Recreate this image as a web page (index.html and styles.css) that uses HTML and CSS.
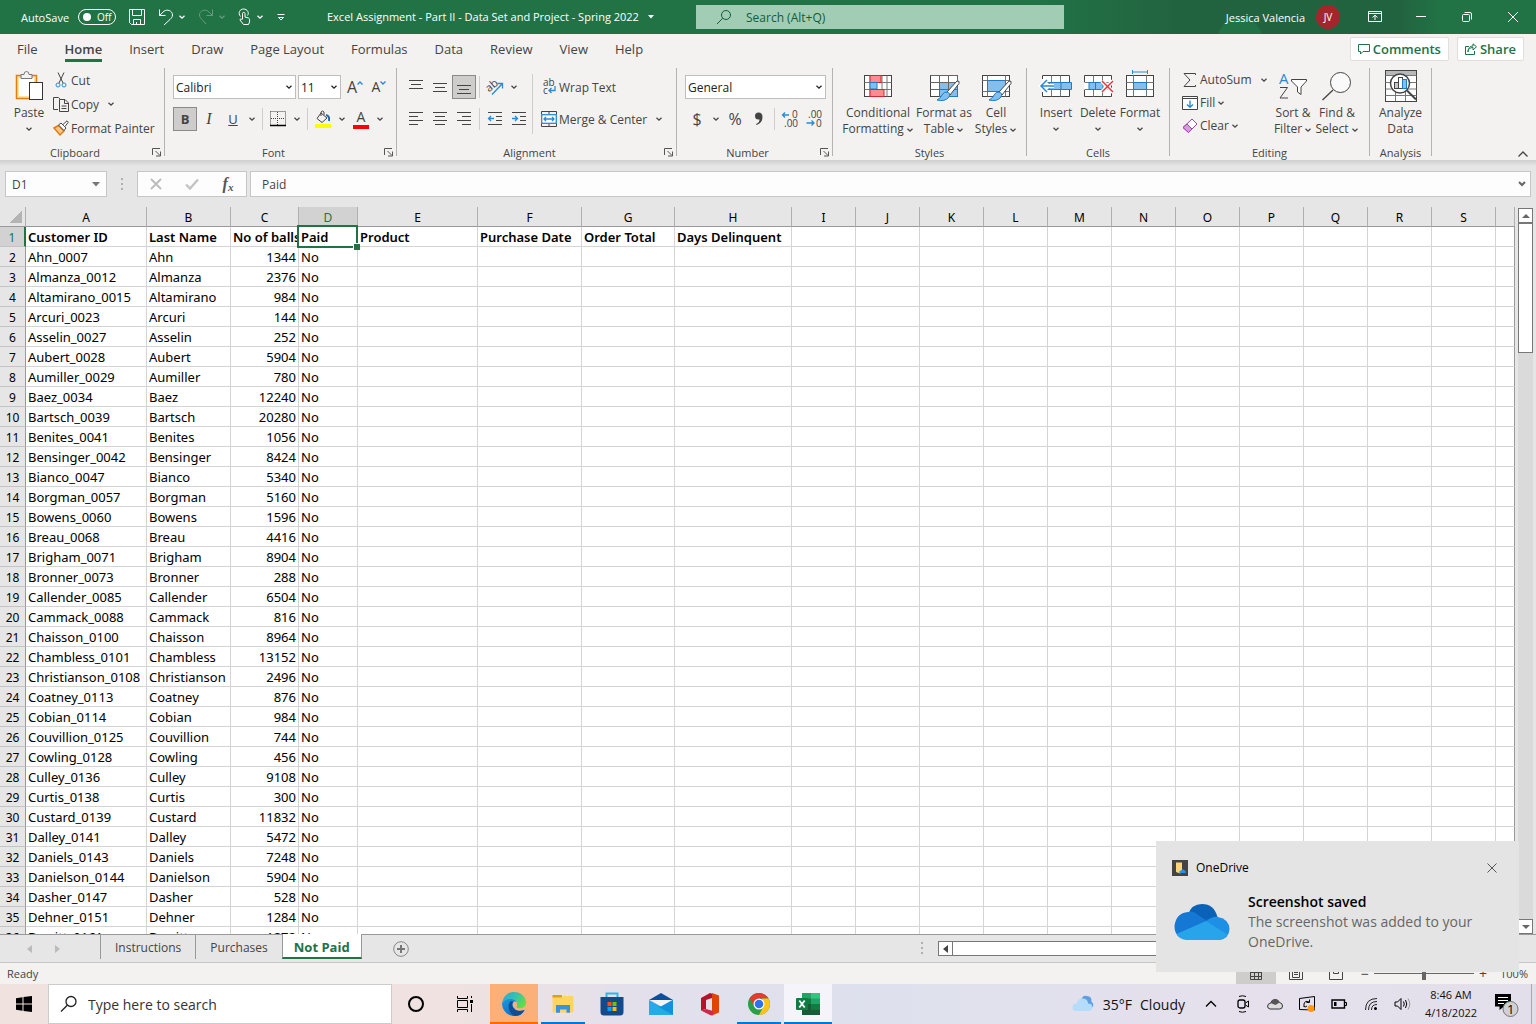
FILE: index.html
```html
<!DOCTYPE html>
<html lang="en">
<head>
    <meta charset="UTF-8">
    <meta name="viewport" content="width=device-width, initial-scale=1.0">
    <title>Excel Assignment - Part II - Data Set and Project - Spring 2022</title>
    <link rel="stylesheet" href="styles.css">
</head>
<body>
    <svg class="defs" width="0" height="0">
        <symbol id="chev" viewBox="0 0 8 8"><path d="M1.5 2.8 L4 5.2 L6.5 2.8" fill="none" stroke="currentColor" stroke-width="1.3"/></symbol>
        <symbol id="launch" viewBox="0 0 10 10"><path d="M0.5 8 V1.5 H8 M3.5 4 L8 8.5 M8.5 4.5 V9 H4" fill="none" stroke="#555"/></symbol>
    </svg>

    <header class="titlebar">
        <div class="quick">
            <label class="autosave">AutoSave <input type="checkbox" class="toggle-box"><span class="toggle"><i></i>Off</span></label>
            <button class="tb" aria-label="Save"><svg width="18" height="18" viewBox="0 0 18 18"><path d="M1.5 1.5 H16.5 V16.5 H3.5 L1.5 14.5 Z M4.5 1.5 V7.5 H13.5 V1.5 M5.5 16.5 V11.5 H12.5 V16.5 M8.5 14 V16"/></svg></button>
            <button class="tb" aria-label="Undo"><svg width="16" height="18" viewBox="0 0 16 18"><path d="M1.5 1.5 V7.5 H7.5 M1.5 7.5 L6 3.2 C9 1 14.5 2.5 14.5 7 C14.5 9 13 10.5 12 11.5 L6 17"/></svg><svg class="chev"><use href="#chev"/></svg></button>
            <button class="tb faded" aria-label="Redo"><svg width="16" height="18" viewBox="0 0 16 18"><path d="M14.5 1.5 V7.5 H8.5 M14.5 7.5 L10 3.2 C7 1 1.5 2.5 1.5 7 C1.5 9 3 10.5 4 11.5 L8 16"/></svg><svg class="chev"><use href="#chev"/></svg></button>
            <button class="tb" aria-label="Touch mode"><svg width="14" height="18" viewBox="0 0 14 18"><path d="M4.5 11 V5.5 C4.5 4 7 4 7 5.5 V9 L10.5 10 C12 10.5 11.5 13 11.5 14 L10.5 16.5 H5.5 L2 12 C2 10.5 3.5 10.5 4.5 12 M2.5 8.5 C-0.5 5 2 1 5.5 1 C9.5 1 11.5 5 9.5 7.5"/></svg><svg class="chev"><use href="#chev"/></svg></button>
            <button class="tb" aria-label="Customize"><svg width="10" height="10" viewBox="0 0 10 10"><path d="M1.5 2.5 H8.5 M2.5 5.5 L5 8 L7.5 5.5 Z"/></svg></button>
        </div>
        <div class="doc-name">Excel Assignment - Part II - Data Set and Project - Spring 2022 <svg width="6" height="4" viewBox="0 0 6 4"><path d="M0 0 H6 L3 3.5 Z" fill="#fff" stroke="none"/></svg></div>
        <label class="tell-me">
            <svg width="16" height="16" viewBox="0 0 16 16"><circle cx="10" cy="6" r="4.5"/><path d="M6.8 9.2 L1 15"/></svg>
            <input type="text" placeholder="Search (Alt+Q)" aria-label="Search">
        </label>
        <div class="account">
            <span>Jessica Valencia</span>
            <span class="avatar">JV</span>
        </div>
        <div class="win-buttons">
            <button aria-label="Ribbon display"><svg width="14" height="12" viewBox="0 0 14 12"><path d="M0.5 0.5 H13.5 V10.5 H0.5 Z M0.5 2.5 H13.5 M7 9 V4.5 M4.5 6.5 L7 4.2 L9.5 6.5"/></svg></button>
            <button aria-label="Minimize"><svg width="10" height="10" viewBox="0 0 10 10"><path d="M0 4.5 H10"/></svg></button>
            <button aria-label="Restore"><svg width="10" height="10" viewBox="0 0 10 10"><rect x="0.5" y="2.5" width="7" height="7" rx="1"/><path d="M2.5 0.5 H8 Q9.5 0.5 9.5 2 V7.5"/></svg></button>
            <button aria-label="Close"><svg width="10" height="10" viewBox="0 0 10 10"><path d="M0 0 L10 10 M10 0 L0 10"/></svg></button>
        </div>
    </header>

    <nav class="tabs">
        <a href="#">File</a>
        <a href="#" class="active">Home</a>
        <a href="#">Insert</a>
        <a href="#">Draw</a>
        <a href="#">Page Layout</a>
        <a href="#">Formulas</a>
        <a href="#">Data</a>
        <a href="#">Review</a>
        <a href="#">View</a>
        <a href="#">Help</a>
        <div class="tab-buttons">
            <button><svg width="12" height="12" viewBox="0 0 12 12"><path d="M0.5 1.5 H11.5 V8.5 H5 L2.5 11 V8.5 H0.5 Z"/></svg>Comments</button>
            <button><svg width="12" height="12" viewBox="0 0 12 12"><path d="M4 3.5 H0.5 V11.5 H9.5 V8 M3 9 C3 6 5 4.5 8 4.5 V7 L11.5 3.8 L8 0.8 V3 C5 3 3 5 3 9 Z"/></svg>Share</button>
        </div>
    </nav>

    <div class="ribbon">
        <section class="group clipboard">
            <div class="tools">
                <button class="big paste">
                    <svg width="30" height="32" viewBox="0 0 30 32"><rect x="2.5" y="5.5" width="20" height="23" fill="#fbe3a4" stroke="#e07c10" stroke-width="1.5"/><rect x="5" y="8" width="15" height="18" fill="#fff" stroke="none"/><path d="M7 8.5 V4.5 H10 Q10 1.5 12.5 1.5 Q15 1.5 15 4.5 H18 V8.5 Z" fill="#f3f2f1" stroke="#777"/><rect x="15.5" y="12.5" width="13" height="17" fill="#fff" stroke="#333"/></svg>
                    <span>Paste</span>
                    <svg class="chev"><use href="#chev"/></svg>
                </button>
                <div class="stack tall">
                    <button class="small"><svg width="16" height="16" viewBox="0 0 16 16"><path d="M5 0.5 L10 11 M11 0.5 L6 11"/><circle cx="5" cy="13" r="2" stroke="#2b8ad0"/><circle cx="11" cy="13" r="2" stroke="#2b8ad0"/></svg>Cut</button>
                    <button class="small"><svg width="16" height="16" viewBox="0 0 16 16"><path d="M5 13.5 H0.5 V1.5 H5.5 L7 3 M6.5 3.5 H12 L15.5 7 V15.5 H6.5 Z M11.5 3.5 V7.5 H15.5 M8.5 10 H13.5 M8.5 12.5 H13.5"/></svg>Copy <svg class="chev far"><use href="#chev"/></svg></button>
                    <button class="small"><svg width="16" height="16" viewBox="0 0 16 16"><path d="M1 8 L5.5 5.5 L11 11 L7 15 Z" fill="#f9c486" stroke="#e07c10" stroke-width="1.5"/><path d="M5.5 5 L8 3 L13 8 L11 10.5 Z" fill="#fff"/><path d="M10 4.5 L14 0.8 L15.3 2.2 L12 6.5" fill="#fff"/></svg>Format Painter</button>
                </div>
            </div>
            <footer><span>Clipboard</span><button aria-label="Clipboard options"><svg width="10" height="10"><use href="#launch"/></svg></button></footer>
        </section>

        <section class="group font">
            <div class="tools rows">
                <div class="row">
                    <div class="pick family"><select aria-label="Font"><option>Calibri</option></select><svg class="chev"><use href="#chev"/></svg></div>
                    <div class="pick size"><select aria-label="Font size"><option>11</option></select><svg class="chev"><use href="#chev"/></svg></div>
                    <button class="grow">A<svg width="6" height="4" viewBox="0 0 6 4"><path d="M0.5 3.5 L3 1 L5.5 3.5" stroke="#2b8ad0" stroke-width="1.4"/></svg></button>
                    <button class="grow less">A<svg width="6" height="4" viewBox="0 0 6 4"><path d="M0.5 0.5 L3 3 L5.5 0.5" stroke="#2b8ad0" stroke-width="1.4"/></svg></button>
                </div>
                <div class="row">
                    <button class="ico on"><b>B</b></button>
                    <button class="ico"><i class="serif">I</i></button>
                    <button class="ico"><u>U</u></button>
                    <button class="drop" aria-label="Underline style"><svg class="chev"><use href="#chev"/></svg></button>
                    <span class="rule"></span>
                    <button class="ico" aria-label="Borders"><svg width="16" height="16" viewBox="0 0 16 16"><path d="M0.5 0.5 H15.5 V14 M0.5 0.5 V14 M7.5 1 V14 M1 7.5 H15" stroke-dasharray="1 1"/><path d="M0 14.5 H16" stroke="#000" stroke-width="1.5"/></svg></button>
                    <button class="drop" aria-label="Border style"><svg class="chev"><use href="#chev"/></svg></button>
                    <span class="rule"></span>
                    <button class="ico" aria-label="Fill color"><svg width="16" height="18" viewBox="0 0 16 18"><path d="M6 3 L12 8 L7 12.5 L2 8.5 Z M6 6 V2 Q7.5 0 9 2 V5"/><path d="M11 5 Q15 6 14 11" stroke="#2468a8" stroke-width="2"/><path d="M0 16 H16" stroke="#ff0" stroke-width="4"/></svg></button>
                    <button class="drop" aria-label="Fill colors"><svg class="chev"><use href="#chev"/></svg></button>
                    <button class="ico color" aria-label="Font color"><span>A</span></button>
                    <button class="drop" aria-label="Font colors"><svg class="chev"><use href="#chev"/></svg></button>
                </div>
            </div>
            <footer><span>Font</span><button aria-label="Font options"><svg width="10" height="10"><use href="#launch"/></svg></button></footer>
        </section>

        <section class="group align">
            <div class="tools">
                <div class="rows">
                    <div class="row">
                        <button class="ico" aria-label="Top align"><svg width="14" height="14" viewBox="0 0 14 14"><path d="M0 0.5 H14 M2 4.5 H12 M0 8.5 H14"/></svg></button>
                        <button class="ico" aria-label="Middle align"><svg width="14" height="14" viewBox="0 0 14 14"><path d="M0 3.5 H14 M2 7.5 H12 M0 11.5 H14"/></svg></button>
                        <button class="ico on" aria-label="Bottom align"><svg width="14" height="14" viewBox="0 0 14 14"><path d="M0 5.5 H14 M2 9.5 H12 M0 13.5 H14"/></svg></button>
                        <span class="rule"></span>
                        <button class="ico" aria-label="Orientation"><svg width="18" height="16" viewBox="0 0 18 16"><text x="0" y="11" font-size="11" fill="#444" stroke="none" transform="rotate(-40 5 8)">ab</text><path d="M6 15.5 L16 5 M11.5 4.5 H16.5 V9.5" stroke="#2b8ad0" stroke-width="1.3"/></svg></button>
                        <button class="drop" aria-label="Orientations"><svg class="chev"><use href="#chev"/></svg></button>
                    </div>
                    <div class="row">
                        <button class="ico" aria-label="Align left"><svg width="14" height="14" viewBox="0 0 14 14"><path d="M0 0.5 H14 M0 4.5 H9 M0 8.5 H14 M0 12.5 H9"/></svg></button>
                        <button class="ico" aria-label="Center"><svg width="14" height="14" viewBox="0 0 14 14"><path d="M0 0.5 H14 M2 4.5 H12 M0 8.5 H14 M2 12.5 H12"/></svg></button>
                        <button class="ico" aria-label="Align right"><svg width="14" height="14" viewBox="0 0 14 14"><path d="M0 0.5 H14 M5 4.5 H14 M0 8.5 H14 M5 12.5 H14"/></svg></button>
                        <span class="rule"></span>
                        <button class="ico" aria-label="Decrease indent"><svg width="14" height="14" viewBox="0 0 14 14"><path d="M0 0.5 H14 M8 4.5 H14 M8 8.5 H14 M0 12.5 H14"/><path d="M0.5 6.5 H6 M3 4 L0.5 6.5 L3 9" stroke="#2b8ad0" stroke-width="1.3"/></svg></button>
                        <button class="ico" aria-label="Increase indent"><svg width="14" height="14" viewBox="0 0 14 14"><path d="M0 0.5 H14 M8 4.5 H14 M8 8.5 H14 M0 12.5 H14"/><path d="M0 6.5 H5.5 M3 4 L5.5 6.5 L3 9" stroke="#2b8ad0" stroke-width="1.3"/></svg></button>
                    </div>
                </div>
                <span class="rule high"></span>
                <div class="rows wide">
                    <button class="row small"><svg width="16" height="18" viewBox="0 0 16 18"><text x="2" y="8" font-size="10" fill="#444" stroke="none">ab</text><text x="2" y="16" font-size="10" fill="#444" stroke="none">c</text><path d="M14 8 V12.5 H8 M10.5 10 L8 12.5 L10.5 15" stroke="#2b8ad0" stroke-width="1.3"/></svg>Wrap Text</button>
                    <button class="row small"><svg width="16" height="16" viewBox="0 0 16 16"><path d="M0.5 3.5 V0.5 H15.5 V3.5 M0.5 12 V15.5 H15.5 V12 M8 0.5 V3 M8 12.5 V15.5"/><rect x="0.7" y="3.7" width="14.6" height="8.6" fill="#fff" stroke="#2b8ad0" stroke-width="1.3"/><path d="M3 8 H13 M5 6 L3 8 L5 10 M11 6 L13 8 L11 10" stroke="#2b8ad0" stroke-width="1.3"/></svg>Merge &amp; Center <svg class="chev far"><use href="#chev"/></svg></button>
                </div>
            </div>
            <footer><span>Alignment</span><button aria-label="Alignment options"><svg width="10" height="10"><use href="#launch"/></svg></button></footer>
        </section>

        <section class="group number">
            <div class="tools rows">
                <div class="row">
                    <div class="pick format"><select aria-label="Number format"><option>General</option></select><svg class="chev"><use href="#chev"/></svg></div>
                </div>
                <div class="row">
                    <button class="ico sign">$</button>
                    <button class="drop" aria-label="Currency"><svg class="chev"><use href="#chev"/></svg></button>
                    <button class="ico sign">%</button>
                    <button class="ico" aria-label="Comma style"><svg width="10" height="14" viewBox="0 0 10 14"><path d="M1 4 Q1 0.5 4.5 0.5 Q8.5 0.5 8.5 5 Q8.5 11 2.5 13 L2 12 Q5.5 10.5 5.5 7.5 Q1 8 1 4 Z" fill="#444" stroke="none"/></svg></button>
                    <span class="rule"></span>
                    <button class="ico" aria-label="Increase decimal"><svg width="16" height="16" viewBox="0 0 16 16"><text x="10" y="7" font-size="10" fill="#444" stroke="none">0</text><text x="2" y="16" font-size="10" fill="#444" stroke="none">.00</text><path d="M0.5 4 H7 M3 1.5 L0.5 4 L3 6.5" stroke="#2b8ad0" stroke-width="1.3"/></svg></button>
                    <button class="ico" aria-label="Decrease decimal"><svg width="16" height="16" viewBox="0 0 16 16"><text x="2" y="7" font-size="10" fill="#444" stroke="none">.00</text><text x="10" y="16" font-size="10" fill="#444" stroke="none">0</text><path d="M0.5 12 H8 M5.5 9.5 L8 12 L5.5 14.5" stroke="#2b8ad0" stroke-width="1.3"/></svg></button>
                </div>
            </div>
            <footer><span>Number</span><button aria-label="Number options"><svg width="10" height="10"><use href="#launch"/></svg></button></footer>
        </section>

        <section class="group styles">
            <div class="tools">
                <button class="big w76">
                    <svg width="32" height="32" viewBox="0 0 32 32"><rect x="2.5" y="5.5" width="27" height="21" fill="#fff"/><path d="M8 5.5 V26.5 M20 5.5 V26.5 M25 5.5 V26.5 M2.5 12.5 H29.5 M2.5 19.5 H29.5" stroke="#777"/><rect x="8" y="5.5" width="11" height="7" fill="#ff8a8f" stroke="#d9242b"/><rect x="8" y="12.5" width="7" height="6.5" fill="#83beec" stroke="#1f7cc4"/><rect x="8" y="19.5" width="14" height="7" fill="#ff8a8f" stroke="#d9242b"/></svg>
                    <span>Conditional<br>Formatting<svg class="chev"><use href="#chev"/></svg></span>
                </button>
                <button class="big w56">
                    <svg width="32" height="32" viewBox="0 0 32 32"><rect x="2.5" y="5.5" width="27" height="21" fill="#fff"/><rect x="11.5" y="12.5" width="18" height="14" fill="#83beec" stroke="#1f7cc4"/><path d="M11.5 5.5 V26.5 M20.5 5.5 V26.5 M2.5 12.5 H29.5 M2.5 19.5 H29.5 M2.5 5.5 H29.5 V15" stroke="#666"/><path d="M19 22 L29 11 Q32 10.5 31 13.5 L22 25 Z" fill="#fff" stroke="#444"/><path d="M19 22 Q23 23 21 27 Q17 32 9 30 Q13 28 14 25 Q16 21.5 19 22 Z" fill="#83beec" stroke="#1f7cc4"/></svg>
                    <span>Format as<br>Table<svg class="chev"><use href="#chev"/></svg></span>
                </button>
                <button class="big w48">
                    <svg width="32" height="32" viewBox="0 0 32 32"><rect x="2.5" y="5.5" width="27" height="21" fill="#fff"/><path d="M2.5 10.5 H29.5 M7.5 5.5 V26.5 M2.5 21.5 H29.5 M25.5 5.5 V26.5" stroke="#777"/><rect x="7.5" y="10.5" width="18" height="11" fill="#83beec" stroke="#1f7cc4"/><path d="M19 22 L29 11 Q32 10.5 31 13.5 L22 25 Z" fill="#fff" stroke="#444"/><path d="M19 22 Q23 23 21 27 Q17 32 9 30 Q13 28 14 25 Q16 21.5 19 22 Z" fill="#83beec" stroke="#1f7cc4"/></svg>
                    <span>Cell<br>Styles<svg class="chev"><use href="#chev"/></svg></span>
                </button>
            </div>
            <footer><span>Styles</span></footer>
        </section>

        <section class="group cells">
            <div class="tools">
                <button class="big w42">
                    <svg width="32" height="32" viewBox="0 0 32 32"><path d="M2.5 9 V5.5 H29.5 V26.5 H2.5 V22" fill="#fff"/><path d="M11.5 5.5 V26.5 M20.5 5.5 V26.5 M2.5 12.5 H29.5 M2.5 19.5 H29.5" stroke="#777"/><path d="M9 12.5 H31.5 V19.5 H9 Z M21 12.5 V19.5" fill="#83beec" stroke="#1f7cc4"/><path d="M1 16 H14 M7 10 L1 16 L7 22" stroke="#fff" stroke-width="4"/><path d="M1 16 H14 M7 10 L1 16 L7 22" stroke="#2b8ad0" stroke-width="1.5"/></svg>
                    <span>Insert</span>
                    <svg class="chev"><use href="#chev"/></svg>
                </button>
                <button class="big w42">
                    <svg width="32" height="32" viewBox="0 0 32 32"><path d="M2.5 12 V5.5 H29.5 V26.5 H2.5 V20" fill="#fff"/><path d="M11.5 5.5 V26.5 M20.5 5.5 V26.5 M2.5 12.5 H29.5 M2.5 19.5 H29.5" stroke="#777"/><path d="M7 12.5 H21 V19.5 H7 Z M13.5 12.5 V19.5" fill="#83beec" stroke="#1f7cc4"/><path d="M20 11 L31 22 M31 11 L20 22" stroke="#fff" stroke-width="4"/><path d="M20 11 L31 22 M31 11 L20 22" stroke="#e8343b" stroke-width="1.5"/></svg>
                    <span>Delete</span>
                    <svg class="chev"><use href="#chev"/></svg>
                </button>
                <button class="big w42">
                    <svg width="32" height="32" viewBox="0 0 32 32"><rect x="2.5" y="5.5" width="27" height="21" fill="#fff"/><path d="M9.5 5.5 V26.5 M22.5 5.5 V26.5 M2.5 12.5 H29.5 M2.5 19.5 H29.5" stroke="#777"/><rect x="9.5" y="12.5" width="13" height="7" fill="#83beec" stroke="#1f7cc4"/><path d="M8.5 0 V4 M23.5 0 V4 M8.5 2 H23.5" stroke="#2b8ad0"/></svg>
                    <span>Format</span>
                    <svg class="chev"><use href="#chev"/></svg>
                </button>
            </div>
            <footer><span>Cells</span></footer>
        </section>

        <section class="group editing">
            <div class="tools">
                <div class="stack">
                    <button class="small"><svg width="16" height="16" viewBox="0 0 16 16"><path d="M13.5 3 V1.5 H2 L8 8 L2 14.5 H13.5 V13"/></svg>AutoSum <svg class="chev far"><use href="#chev"/></svg></button>
                    <button class="small"><svg width="16" height="16" viewBox="0 0 16 16"><path d="M0.5 1.5 H15.5 V14.5 H0.5 Z" fill="#fff"/><path d="M0.5 3.5 H15.5"/><path d="M8 5.5 V12 M5 9.5 L8 12.3 L11 9.5" stroke="#2b8ad0" stroke-width="1.4"/></svg>Fill<svg class="chev"><use href="#chev"/></svg></button>
                    <button class="small"><svg width="16" height="16" viewBox="0 0 16 16"><path d="M10 1 L15 6 L6.5 14.5 L1 9.5 Z" fill="#fff" stroke="#9b45a5"/><path d="M5 6 L10 11 L6.5 14.5 L1 9.5 Z" fill="#d79ade" stroke="#9b45a5"/></svg>Clear<svg class="chev"><use href="#chev"/></svg></button>
                </div>
                <button class="big w44 push">
                    <svg width="30" height="32" viewBox="0 0 30 32"><text x="1" y="14" font-size="15" fill="#2b8ad0" stroke="none">A</text><path d="M2 17.5 H9.5 L2 28 H10"/><path d="M13.5 9.5 H28.5 V11 L23 17 V24.5 L19.5 22 V17 L13.5 11 Z" fill="#fff"/></svg>
                    <span>Sort &amp;<br>Filter<svg class="chev"><use href="#chev"/></svg></span>
                </button>
                <button class="big w44">
                    <svg width="30" height="32" viewBox="0 0 30 32"><circle cx="18.5" cy="12.5" r="10" fill="#fafafa"/><path d="M11 20 L0.5 30" stroke-width="1.3"/></svg>
                    <span>Find &amp;<br>Select<svg class="chev"><use href="#chev"/></svg></span>
                </button>
            </div>
            <footer><span>Editing</span></footer>
        </section>

        <section class="group analysis">
            <div class="tools">
                <button class="big w44">
                    <svg width="32" height="32" viewBox="0 0 32 32"><rect x="0.5" y="0.5" width="31" height="31" fill="#fff"/><rect x="1" y="1" width="30" height="4" fill="#b8b8b8" stroke="none"/><path d="M0.5 5.5 H31.5 M0.5 12.5 H31.5 M0.5 19 H31.5 M0.5 25.5 H31.5 M10.5 19 V31 M20.5 19 V31" stroke="#777"/><circle cx="15" cy="13.5" r="9.5" fill="#fff" stroke="#444" stroke-width="1.5"/><path d="M22 20.5 L31 29.5" stroke-width="2"/><rect x="9.5" y="12.5" width="4" height="6" fill="#c8c8c8"/><rect x="13.5" y="7.5" width="4" height="11" fill="#fff"/><rect x="17.5" y="9.5" width="4" height="9" fill="#83beec" stroke="#1f7cc4"/></svg>
                    <span>Analyze<br>Data</span>
                </button>
            </div>
            <footer><span>Analysis</span></footer>
        </section>
        <button class="collapse" aria-label="Collapse ribbon"><svg width="10" height="6" viewBox="0 0 10 6"><path d="M0.5 5.5 L5 1 L9.5 5.5" stroke-width="1.3"/></svg></button>
    </div>

    <div class="formula-bar">
        <label class="name-box"><input type="text" value="D1" aria-label="Name box"><svg width="8" height="5" viewBox="0 0 8 5"><path d="M0 0 H8 L4 4.5 Z" fill="#777" stroke="none"/></svg></label>
        <span class="dots"></span>
        <div class="fx">
            <button aria-label="Cancel"><svg width="12" height="12" viewBox="0 0 12 12"><path d="M1 1 L11 11 M11 1 L1 11" stroke="#bbb" stroke-width="1.8"/></svg></button>
            <button aria-label="Enter"><svg width="14" height="12" viewBox="0 0 14 12"><path d="M1 6.5 L5 10.5 L13 1.5" stroke="#c4c4c4" stroke-width="2.4"/></svg></button>
            <button class="fx-sign">f<small>x</small></button>
        </div>
        <label class="formula"><input type="text" value="Paid" aria-label="Formula"><svg width="8" height="6" viewBox="0 0 8 6"><path d="M1 1 L4 4 L7 1" stroke="#666" stroke-width="2"/></svg></label>
    </div>

    <main class="sheet">
        <div class="grid">
            <table>
                <colgroup>
                    <col class="c-num"><col class="c-a"><col class="c-b"><col class="c-c"><col class="c-d"><col class="c-e"><col class="c-f"><col class="c-g"><col class="c-h"><col span="11" class="c-std"><col>
                </colgroup>
                <thead><tr id="letters"></tr></thead>
                <tbody id="rows"></tbody>
            </table>
        </div>
        <div class="vscroll">
            <button aria-label="Scroll up"><svg width="8" height="4" viewBox="0 0 8 4"><path d="M0 4 L4 0 L8 4 Z" fill="#666" stroke="none"/></svg></button>
            <div class="vtrack"><div class="vthumb"></div></div>
            <button aria-label="Scroll down"><svg width="8" height="4" viewBox="0 0 8 4"><path d="M0 0 L4 4 L8 0 Z" fill="#666" stroke="none"/></svg></button>
        </div>
    </main>

    <div class="sheet-tabs">
        <div class="nav-arrows">
            <button aria-label="Previous sheet"><svg width="5" height="8" viewBox="0 0 5 8"><path d="M5 0 V8 L0 4 Z" fill="#bbb" stroke="none"/></svg></button>
            <button aria-label="Next sheet"><svg width="5" height="8" viewBox="0 0 5 8"><path d="M0 0 V8 L5 4 Z" fill="#bbb" stroke="none"/></svg></button>
        </div>
        <button class="tab">Instructions</button>
        <button class="tab">Purchases</button>
        <button class="tab current">Not Paid</button>
        <button class="add" aria-label="New sheet"><svg width="16" height="16" viewBox="0 0 16 16"><circle cx="8" cy="8" r="7.3" stroke="#888"/><path d="M8 4 V12 M4 8 H12" stroke="#777" stroke-width="2"/></svg></button>
        <span class="dots"></span>
        <div class="hscroll"><button aria-label="Scroll left"><svg width="5" height="8" viewBox="0 0 5 8"><path d="M5 0 V8 L0 4 Z" fill="#444" stroke="none"/></svg></button><div class="hthumb"></div></div>
    </div>

    <div class="status">
        <span>Ready</span>
        <div class="views">
            <button class="on" aria-label="Normal"><svg width="12" height="12" viewBox="0 0 12 12"><path d="M0.5 0.5 H11.5 V11.5 H0.5 Z M0.5 4.5 H11.5 M0.5 8.5 H11.5 M4.5 0.5 V11.5 M8.5 0.5 V11.5"/></svg></button>
            <button aria-label="Page layout"><svg width="14" height="12" viewBox="0 0 14 12"><path d="M0.5 0.5 H13.5 V11.5 H0.5 Z M3.5 2.5 H10.5 V9.5 H3.5 Z M5 4.5 H9 M5 6.5 H9"/></svg></button>
            <button aria-label="Page break"><svg width="14" height="12" viewBox="0 0 14 12"><path d="M0.5 0.5 H13.5 V11.5 H0.5 Z M4.5 0.5 V5.5 H9.5 V0.5"/></svg></button>
        </div>
        <button class="zoom-step">−</button>
        <input type="range" value="50" aria-label="Zoom">
        <button class="zoom-step">+</button>
        <span class="percent">100%</span>
    </div>

    <div class="taskbar">
        <button class="start" aria-label="Start"><svg width="16" height="16" viewBox="0 0 16 16"><path d="M0 2.2 L6.5 1.3 V7.5 H0 Z M7.5 1.1 L16 0 V7.5 H7.5 Z M0 8.5 H6.5 V14.7 L0 13.8 Z M7.5 8.5 H16 V16 L7.5 14.9 Z" fill="#000" stroke="none"/></svg></button>
        <label class="search"><svg width="18" height="18" viewBox="0 0 18 18"><circle cx="11" cy="6.5" r="5" stroke="#222" stroke-width="1.3"/><path d="M7.3 10.3 L1 16.5" stroke="#222" stroke-width="1.3"/></svg><input type="text" placeholder="Type here to search" aria-label="Windows search"></label>
        <div class="apps">
            <button aria-label="Cortana"><svg width="18" height="18" viewBox="0 0 18 18"><circle cx="9" cy="9" r="7" stroke="#000" stroke-width="2"/></svg></button>
            <button aria-label="Task view"><svg width="18" height="18" viewBox="0 0 18 18"><path d="M1.5 1 V3.5 H11.5 V1 M1.5 5.5 H11.5 V12.5 H1.5 Z M1.5 17 V14.5 H11.5 V17 M15.5 1 V3 M15.5 9 V17" stroke="#000"/><rect x="14" y="5" width="3" height="3" fill="#000" stroke="none"/></svg></button>
            <button class="alert" aria-label="Edge"><svg class="flat" width="26" height="26" viewBox="0 0 26 26">
                <defs>
                    <linearGradient id="edge-a" x1="0" y1="0" x2="1" y2="0.5"><stop offset="0" stop-color="#2ba5de"/><stop offset="0.6" stop-color="#38c4a8"/><stop offset="1" stop-color="#62dc48"/></linearGradient>
                    <linearGradient id="edge-b" x1="0" y1="0" x2="0.5" y2="1"><stop offset="0" stop-color="#1e9be2"/><stop offset="1" stop-color="#0b6fc8"/></linearGradient>
                </defs>
                <path d="M1 12 C1 19 6 25 14 25 C19 25 22 22 23.5 19 C21 20.5 17 20.5 14 18.5 L15 9 L6 6 Z" fill="url(#edge-b)"/>
                <path d="M10 10 C6 13 7 22 14 25 C19 25 22 22 23.5 19 C18 21 11.5 19 11.5 14 C11.5 12 12 11 13 11 Z" fill="#0c4f97"/>
                <path d="M1.2 12 C2 5 7 1 13 1 C20 1 25 6 25 11.5 C25 17 19 18.5 15.5 16.5 C14.5 16 16.5 14.5 16 12.5 C15.5 9.5 12.5 8 9.5 8 C6 8 3 9 1.2 12 Z" fill="url(#edge-a)"/>
                <path d="M13 10.5 C10 13 12 18.5 17 19 L16 16.8 C14.5 16.2 16.5 14 16 12.5 C15.5 11 14.5 10.2 13 10.5 Z" fill="#fbb07a"/></svg></button>
            <button class="open" aria-label="File Explorer"><svg class="flat" width="24" height="24" viewBox="0 0 24 24"><path d="M1.5 3 H11 V6 H1.5 Z" fill="#e0a010"/><path d="M1.5 5.5 H10 L12 4 H22.5 V20.5 H1.5 Z" fill="#ffd560"/><path d="M5 13 H19 V20.8 H15.5 V17.5 H9 V20.8 H5 Z" fill="#3a91dc"/></svg></button>
            <button aria-label="Store"><svg class="flat" width="24" height="24" viewBox="0 0 24 24"><path d="M6.5 5 V1.5 H17.5 V5" fill="none" stroke="#2cb5f0" stroke-width="2"/><path d="M0.5 5 H23.5 V20 Q23.5 23.5 20 23.5 H4 Q0.5 23.5 0.5 20 Z" fill="#14498a"/><path d="M7.5 10 H11.5 V14 H7.5 Z" fill="#f25022"/><path d="M12.5 10 H16.5 V14 H12.5 Z" fill="#7fba00"/><path d="M7.5 15 H11.5 V19 H7.5 Z" fill="#00a4ef"/><path d="M12.5 15 H16.5 V19 H12.5 Z" fill="#ffb900"/></svg></button>
            <button aria-label="Mail"><svg class="flat" width="24" height="24" viewBox="0 0 24 24"><path d="M0 8 L12 1 L24 8 Z" fill="#0b4f9e"/><path d="M2 8 H22 L12 15 Z" fill="#f4f4f4"/><path d="M0 8 L12 14.5 L24 8 V23 H0 Z" fill="#27aae8"/><path d="M24 8 V23 L9 14.5 L12 14.5 Z" fill="#1491dc"/></svg></button>
            <button aria-label="Office"><svg class="flat" width="24" height="24" viewBox="0 0 24 24"><path d="M3 6 L12 1 L15 2 L14 6 L8 8 V17 L3 18.5 Z" fill="#b5122c"/><path d="M14 1 L21 3.5 V20.5 L14 23.5 Z" fill="#e24407"/><path d="M3 18.5 L8 17 L15 19 V23 L13 23.5 Z" fill="#cf2848"/></svg></button>
            <button class="open" aria-label="Chrome"><svg class="flat" width="24" height="24" viewBox="0 0 24 24"><circle cx="12" cy="12" r="11" fill="#2a9f48"/><path d="M2.5 6.5 A11 11 0 0 1 21.5 6.5 H12 L7.5 14.5 Z" fill="#e33b2e"/><path d="M21.5 6.5 A11 11 0 0 1 12 23 L16.5 14.5 L15 6.5 Z" fill="#fcc31e"/><circle cx="12" cy="12" r="5.5" fill="#fff"/><circle cx="12" cy="12" r="4.3" fill="#2b74e8"/></svg></button>
            <button class="open focused" aria-label="Excel"><svg class="flat" width="26" height="24" viewBox="0 0 26 24"><path d="M7 1 H25 V23 H7 Z" fill="#21a366"/><path d="M16 1 H25 V6.5 H16 Z" fill="#33c481"/><path d="M7 6.5 H16 V12 H7 Z M16 12 H25 V17.5 H16 Z" fill="#107c41"/><path d="M7 12 H16 V17.5 H7 Z M7 17.5 H25 V23 H7 Z" fill="#185c37"/><rect x="1" y="6" width="12" height="12" rx="1" fill="#107c41"/><path d="M4.3 8.5 L9.7 15.5 M9.7 8.5 L4.3 15.5" stroke="#fff" stroke-width="1.8"/></svg></button>
        </div>
        <div class="tray">
            <button class="weather"><svg class="flat" width="24" height="20" viewBox="0 0 24 20"><path d="M10 7 Q11 1 16 2 Q21 2 20.5 8 Q23 9 22 13 L12 14 Z" fill="#5d9fe0"/><path d="M5 17 Q1 16.5 1.5 12.5 Q2 9.5 5.5 9.5 Q7 4 12 4.5 Q17 5 17 9.5 Q21.5 9.5 21.5 13.5 Q21 17 17 17 Z" fill="#b5ddfa"/></svg><span>35°F</span><span>Cloudy</span></button>
            <button aria-label="Hidden icons"><svg width="12" height="8" viewBox="0 0 12 8"><path d="M1 6.5 L6 1.5 L11 6.5" stroke="#000" stroke-width="1.3"/></svg></button>
            <button aria-label="Meet now"><svg width="14" height="18" viewBox="0 0 14 18"><path d="M3 1.5 Q6.5 0 10 1.5 M3 16.5 Q6.5 18 10 16.5" stroke="#000"/><rect x="2" y="5" width="7" height="8" rx="2" stroke="#000" stroke-width="1.3"/><path d="M9.5 8 L12.5 6 V12 L9.5 10" stroke="#000"/></svg></button>
            <button aria-label="OneDrive"><svg width="16" height="12" viewBox="0 0 16 12"><path d="M3 11 Q0.5 10.5 0.6 8 Q0.8 5.5 3.5 5.3 Q4.5 1.5 8 1.5 Q11.5 1.5 12.5 4.5 Q15.5 5 15.5 8 Q15.5 11 12.5 11 Z" fill="#ddd" stroke="#333"/><path d="M3.5 5 Q5 1.5 8 1.5 Q11.5 1.5 12.5 4.5 L8.5 7 Z" fill="#555" stroke="none"/></svg></button>
            <button aria-label="Update"><svg width="18" height="18" viewBox="0 0 18 18"><path d="M1.5 3.5 L16.5 1.5 V15 L1.5 14.5 Z M6 9 Q7 5 11 7 M11.5 4.5 V7.5 H8.5 M6 12 V9 M6 11.5 Q8 12.5 9 11" stroke="#000"/><circle cx="13" cy="13.5" r="3.5" fill="#ff9a0d" stroke="none"/></svg></button>
            <button aria-label="Battery"><svg width="16" height="10" viewBox="0 0 16 10"><path d="M1 1 H13.5 V9 H1 Z" stroke="#000" stroke-width="1.4"/><path d="M13.5 3.5 H15.5 V6.5 H13.5" stroke="#000"/><rect x="3" y="3" width="2.5" height="4" fill="#000" stroke="none"/></svg></button>
            <button aria-label="Network"><svg width="14" height="14" viewBox="0 0 14 14"><path d="M1.5 13 Q1.5 1.5 13 1.5 M4.5 13 Q4.5 4.5 13 4.5 M7.5 13 Q7.5 7.5 13 7.5" stroke="#222"/><circle cx="11.5" cy="11.5" r="1.5" fill="#000" stroke="none"/></svg></button>
            <button aria-label="Volume"><svg width="18" height="14" viewBox="0 0 18 14"><path d="M1 5 H3.5 L7 1.5 V12.5 L3.5 9 H1 Z M9.5 4.5 Q11 7 9.5 9.5 M11.5 3 Q14 7 11.5 11" stroke="#000"/><path d="M14 1.5 Q17.5 7 14 12.5" stroke="#999"/></svg></button>
            <div class="clock"><span>8:46 AM</span><span>4/18/2022</span></div>
            <button class="notices" aria-label="Notifications"><svg width="24" height="28" viewBox="0 0 24 28"><path d="M0 4 H16 V16.5 H9 L4.5 20 V16.5 H0 Z" fill="#000" stroke="none"/><path d="M3 7.5 H13 M3 10.5 H13 M3 13.5 H9" stroke="#fff"/><circle cx="15.5" cy="19" r="7.5" fill="#cfd0d4" stroke="#777"/><text x="12" y="24" font-size="13" fill="#000" stroke="none">1</text></svg></button>
        </div>
    </div>

    <aside class="toast">
        <div class="toast-head">
            <svg class="flat" width="16" height="16" viewBox="0 0 16 16"><rect width="16" height="16" fill="#444"/><path d="M4 2.5 H10 V12.5 L8 13.5 L4 12 Z" fill="#ffd675"/><path d="M7.5 13 Q6.5 11 9 10.5 Q11 8.5 12.5 10.5 Q14.5 11 13.5 13 Z" fill="#2196ec"/></svg>
            <span>OneDrive</span>
            <button aria-label="Dismiss"><svg width="10" height="10" viewBox="0 0 10 10"><path d="M0.5 0.5 L9.5 9.5 M9.5 0.5 L0.5 9.5" stroke="#555"/></svg></button>
        </div>
        <div class="toast-body">
            <svg class="flat" width="56" height="38" viewBox="0 0 56 38"><path d="M14 12 Q17 1 28 1 Q40 1 43.5 14 L32 22 Z" fill="#0a62b8"/><path d="M12 36 Q0.5 35 0.5 23 Q2 10 14 9 Q20 8 24 12 L40 22 L12 36 Z" fill="#1478d4"/><path d="M32 18.5 Q38 13 44 14 Q55 16 55.5 26 Q55 36 45 37 L30 24 Z" fill="#1d8fe4"/><path d="M2.5 31 L32 18 L53.5 31.5 Q50 37 44 37 H12 Q5 36 2.5 31 Z" fill="#28a4ea"/></svg>
            <div>
                <strong>Screenshot saved</strong>
                <p>The screenshot was added to your OneDrive.</p>
            </div>
        </div>
    </aside>
    <script src="script.js"></script>
</body>
</html>
```
FILE: styles.css
```css
* {
    box-sizing: border-box;
}
body {
    margin: 0;
    height: 100vh;
    display: flex;
    flex-direction: column;
    overflow: hidden;
    font-family: "Open Sans", "Noto Sans", sans-serif;
    font-size: 12px;
    color: #444;
    background-color: #e6e6e6;
}
button {
    border: none;
    background: none;
    padding: 0;
    margin: 0;
    font: inherit;
    color: inherit;
    display: flex;
    align-items: center;
    justify-content: center;
    white-space: nowrap;
}
input, select {
    font: inherit;
    color: inherit;
    border: none;
    background: none;
    padding: 0;
    margin: 0;
    min-width: 0;
    outline: none;
    appearance: none;
}
svg {
    fill: none;
    stroke: #444;
    flex-shrink: 0;
    overflow: visible;
}
.flat {
    stroke: none;
}
.defs {
    position: absolute;
}
.chev {
    width: 8px;
    height: 8px;
}

/* title bar */
.titlebar {
    height: 34px;
    flex-shrink: 0;
    display: flex;
    align-items: center;
    font-size: 11px;
    color: #fff;
    background: radial-gradient(circle at 1480px 4px, #217346 32px, transparent 33px),
        radial-gradient(circle at 1240px 40px, #217346 22px, transparent 23px),
        linear-gradient(90deg, #217346 1030px, #22633f 1180px, #22633f 1400px, #217346 1440px);
}
.titlebar svg {
    stroke: #fff;
}
.quick {
    width: 306px;
    margin-left: 21px;
    display: flex;
    align-items: center;
    gap: 12px;
}
.autosave {
    display: flex;
    align-items: center;
    gap: 9px;
}
.toggle-box {
    position: absolute;
    opacity: 0;
}
.toggle {
    width: 38px;
    height: 16px;
    border: 1px solid #fff;
    border-radius: 8px;
    display: flex;
    align-items: center;
    gap: 6px;
    padding-left: 4px;
    font-size: 10px;
}
.toggle i {
    width: 8px;
    height: 8px;
    border-radius: 50%;
    background-color: #fff;
}
.tb {
    gap: 4px;
}
.faded {
    opacity: 0.3;
}
.doc-name {
    white-space: nowrap;
    width: 369px;
    padding-bottom: 2px;
}
.doc-name svg {
    margin: 0 0 2px 6px;
}
.tell-me {
    flex: 0 1 368px;
    height: 24px;
    background-color: #a0cdb4;
    color: #165c36;
    display: flex;
    align-items: center;
    gap: 14px;
    padding-left: 20px;
    font-size: 12px;
}
.tell-me svg {
    stroke: #165c36;
}
.tell-me input {
    flex: 1;
}
input::placeholder {
    color: inherit;
    opacity: 1;
}
.account {
    margin-left: auto;
    display: flex;
    align-items: center;
    gap: 11px;
}
.avatar {
    width: 24px;
    height: 24px;
    border-radius: 50%;
    background-color: #a4262c;
    font-size: 10px;
    line-height: 24px;
    text-align: center;
}
.win-buttons {
    display: flex;
    margin-left: 12px;
}
.win-buttons button {
    width: 46px;
    height: 32px;
}

/* ribbon tabs */
.tabs {
    height: 32px;
    flex-shrink: 0;
    display: flex;
    align-items: flex-start;
    gap: 27px;
    padding: 6px 12px 0 17px;
    background-color: #f3f2f1;
    font-size: 13px;
}
.tabs a {
    color: #444;
    text-decoration: none;
    line-height: 18px;
    padding-bottom: 1px;
}
.tabs .active {
    font-weight: 600;
    border-bottom: 3px solid #217346;
}
.tab-buttons {
    margin-left: auto;
    display: flex;
    gap: 8px;
}
.tab-buttons button {
    height: 24px;
    margin-top: -3px;
    padding: 0 7px;
    gap: 3px;
    background-color: #fff;
    border: 1px solid #e1dfdd;
    border-radius: 2px;
    color: #217346;
    font-weight: 600;
}
.tab-buttons svg {
    stroke: #217346;
}

/* ribbon */
.ribbon {
    height: 94px;
    flex-shrink: 0;
    display: flex;
    align-items: flex-start;
    padding-top: 2px;
    background-color: #f3f2f1;
}
.group {
    height: 88px;
    border-right: 1px solid #b5b3b1;
    display: flex;
    flex-direction: column;
}
.group footer {
    display: flex;
    align-items: center;
    height: 16px;
    flex-shrink: 0;
    font-size: 11px;
}
.group footer span {
    flex: 1;
    text-align: center;
}
.group footer button {
    width: 14px;
}
.clipboard { width: 165px; }
.font { width: 232px; }
.align { width: 280px; }
.number { width: 156px; }
.styles { width: 194px; }
.cells { width: 143px; }
.editing { width: 200px; }
.analysis { width: 62px; }
.tools {
    height: 76px;
    flex-shrink: 0;
    display: flex;
}
.rows {
    display: flex;
    flex-direction: column;
    gap: 8px;
    padding-top: 7px;
}
.font .rows, .number .rows {
    padding-left: 8px;
}
.row {
    height: 24px;
    display: flex;
    align-items: center;
}
.stack {
    display: flex;
    flex-direction: column;
    align-items: stretch;
    padding-left: 12px;
}
.stack .small {
    height: 23px;
}
.stack.tall {
    padding-left: 7px;
}
.tall .small {
    height: 24px;
}
.small {
    gap: 2px;
    justify-content: flex-start;
}
.far {
    margin-left: 6px;
}
.big {
    flex-direction: column;
    justify-content: flex-start;
    padding-top: 2px;
    line-height: 16px;
}
.big > span {
    margin-top: 3px;
}
.big > .chev {
    margin-top: 4px;
}
.big span .chev {
    vertical-align: middle;
    margin-left: 2px;
}
.paste {
    padding-left: 12px;
    width: 46px;
}
.w76 { width: 76px; }
.w56 { width: 56px; }
.w48 { width: 48px; }
.w42 { width: 42px; }
.w44 { width: 44px; }
.styles .tools {
    padding-left: 7px;
}
.cells .tools {
    padding-left: 8px;
}
.push {
    margin-left: auto;
}
.editing .tools {
    padding-right: 10px;
}
.analysis .tools {
    justify-content: center;
}
.ico {
    width: 24px;
    height: 24px;
    font-size: 13px;
}
.on {
    background-color: #cfcdcb;
    border: 1px solid #8c8a88;
}
.drop {
    width: 14px;
    height: 24px;
}
.rule {
    width: 1px;
    height: 22px;
    margin: 0 3px;
    background-color: #d0cecc;
}
.high {
    height: 60px;
    margin: 6px 8px 0 0;
}
.align .tools {
    padding-left: 7px;
}
.align .rows:first-child {
    width: 128px;
}
.pick {
    position: relative;
    height: 24px;
    border: 1px solid #c0bebc;
    background-color: #fff;
    color: #222;
}
.pick select {
    width: 100%;
    height: 100%;
    padding-left: 2px;
}
.pick .chev {
    position: absolute;
    right: 2px;
    top: 7px;
    pointer-events: none;
    color: #222;
}
.family { width: 123px; }
.size { width: 43px; margin: 0 4px 0 2px; }
.format { width: 141px; }
.grow {
    font-size: 16px;
    align-items: flex-start;
    line-height: 20px;
    width: 20px;
}
.grow svg {
    margin-top: 4px;
}
.less {
    font-size: 14px;
    margin-left: 4px;
}
.serif {
    font-family: "Liberation Serif", serif;
    font-size: 16px;
}
.color span {
    font-size: 14px;
    line-height: 16px;
    width: 16px;
    border-bottom: 4px solid #f00;
}
.sign {
    font-size: 16px;
}
.collapse {
    margin: 83px 8px 0 auto;
}

/* formula bar */
.formula-bar {
    height: 41px;
    flex-shrink: 0;
    display: flex;
    padding: 11px 5px 4px;
    background: linear-gradient(#cfcfcf, #e6e6e6 6px);
}
.name-box, .fx, .formula {
    height: 26px;
    border: 1px solid #c6c6c6;
    background-color: #fdfdfd;
    display: flex;
    align-items: center;
}
.name-box {
    width: 102px;
    padding: 0 6px;
}
.name-box input, .formula input {
    flex: 1;
}
.dots {
    width: 2px;
    height: 12px;
    margin: 7px 14px 0;
    background: linear-gradient(#b0b0b0 2px, transparent 2px) 0 0 / 2px 5px;
}
.fx {
    width: 110px;
}
.fx button {
    flex: 1;
}
.fx-sign {
    font: italic bold 16px "Liberation Serif", serif;
    color: #555;
}
.fx-sign small {
    font-size: 11px;
    padding-top: 5px;
}
.formula {
    flex: 1;
    margin-left: 3px;
    padding: 0 4px 0 11px;
}

/* grid */
.sheet {
    flex: 1;
    min-height: 0;
    display: flex;
}
.grid {
    flex: 1;
    overflow: hidden;
    padding-top: 6px;
}
table {
    width: 100%;
    table-layout: fixed;
    border-collapse: separate;
    border-spacing: 0;
    font-family: "Noto Sans", "Open Sans", sans-serif;
    font-size: 13px;
    color: #000;
}
.c-num { width: 26px; }
.c-a { width: 121px; }
.c-b { width: 84px; }
.c-c { width: 68px; }
.c-d { width: 59px; }
.c-e { width: 120px; }
.c-f { width: 104px; }
.c-g { width: 93px; }
.c-h { width: 117px; }
.c-std { width: 64px; }
th, td {
    height: 20px;
    line-height: 17px;
    padding: 2px 2px 0;
    border-right: 1px solid #d4d4d4;
    border-bottom: 1px solid #d4d4d4;
    white-space: nowrap;
    overflow: hidden;
    text-align: left;
}
td {
    background-color: #fff;
}
thead th {
    font-size: 12px;
    font-weight: normal;
    text-align: center;
    background-color: #e6e6e6;
    border-right-color: #b0b0b0;
    border-bottom-color: #999;
}
tbody th {
    font-size: 12px;
    font-weight: normal;
    text-align: center;
    background-color: #e6e6e6;
    border-right-color: #999;
    border-bottom-color: #c4c4c4;
}
td:last-child {
    border-right-color: #999;
}
th.picked {
    background-color: #d2d2d2;
    color: #217346;
}
tbody th.picked {
    border-right: 2px solid #217346;
}
tbody tr:first-child td {
    font-weight: 600;
}
td.num {
    text-align: right;
}
td.selected {
    position: relative;
    overflow: visible;
}
td.selected::after {
    content: "";
    position: absolute;
    inset: -2px -1px -2px -2px;
    border: 2px solid #217346;
}
td.selected::before {
    content: "";
    position: absolute;
    z-index: 1;
    right: -3px;
    bottom: -4px;
    width: 6px;
    height: 6px;
    background-color: #217346;
    border: 1px solid #fff;
    border-width: 1px 0 0 1px;
}
thead .corner {
    background: linear-gradient(135deg, #e6e6e6 50%, #b4b4b4 50%) 10px 4px / 12px 12px no-repeat;
}
.vscroll {
    width: 21px;
    padding: 7px 3px 0;
    display: flex;
    flex-direction: column;
}
.vscroll button, .vthumb, .hscroll button, .hthumb {
    width: 15px;
    height: 15px;
    background-color: #fff;
    border: 1px solid #777;
    flex-shrink: 0;
}
.vtrack {
    flex: 1;
    background-color: #dadada;
}
.vthumb {
    height: 130px;
}

/* sheet tabs */
.sheet-tabs {
    height: 28px;
    flex-shrink: 0;
    display: flex;
    border-top: 1px solid #999;
}
.nav-arrows {
    width: 100px;
    display: flex;
    gap: 23px;
    padding-left: 27px;
}
.tab {
    height: 24px;
    padding: 0 14px;
    border-left: 1px solid #999;
}
.tab.current {
    padding: 2px 11px 0;
    margin-top: -1px;
    height: 25px;
    background-color: #fff;
    color: #217346;
    font-size: 13px;
    font-weight: bold;
    border-right: 1px solid #999;
    border-bottom: 2px solid #217346;
}
.add {
    margin-left: 31px;
}
.sheet-tabs .dots {
    margin: 7px 15px 0 auto;
}
.hscroll {
    display: flex;
    width: 40%;
    max-width: 580px;
    margin: 6px 18px 0 0;
}
.hthumb {
    flex: 1;
    margin-left: -1px;
}

/* status bar */
.status {
    height: 22px;
    flex-shrink: 0;
    display: flex;
    align-items: center;
    padding: 0 8px 0 7px;
    background-color: #f3f2f1;
    border-top: 1px solid #c6c6c6;
    font-size: 11px;
}
.views {
    display: flex;
    margin-left: auto;
}
.views button {
    width: 40px;
    height: 21px;
}
.views .on {
    border: none;
}
.zoom-step {
    width: 18px;
    font-size: 14px;
}
.status input {
    width: 100px;
    height: 12px;
    background: linear-gradient(#666, #666) center / 100% 1px no-repeat;
}
.status input::-webkit-slider-thumb {
    appearance: none;
    width: 4px;
    height: 12px;
    background-color: #666;
}
.percent {
    margin-left: 8px;
}

/* windows taskbar */
.taskbar {
    height: 40px;
    flex-shrink: 0;
    display: flex;
    background: linear-gradient(90deg, #f0e2df, #efe2e0 30%, #e4e0eb 40%, #dde1ed 56%, #e5e0ec 80%, #e2dfeb);
    color: #111;
}
.start {
    width: 48px;
}
.search {
    width: 344px;
    background-color: #fff;
    border: 1px solid #ccc;
    display: flex;
    align-items: center;
    gap: 10px;
    padding-left: 11px;
    font-size: 14px;
    color: #333;
}
.search input {
    flex: 1;
}
.apps {
    display: flex;
    gap: 1px;
}
.apps button {
    width: 48px;
    padding-top: 2px;
    border-bottom: 2px solid transparent;
}
.apps .alert {
    background-color: #fbb07a;
    border-color: #ff6a00;
}
.apps .open {
    border-image: linear-gradient(90deg, transparent 4px, #0078d7 4px, #0078d7 44px, transparent 44px) 2;
}
.apps .focused {
    background-color: #f4f4fa;
    border-image: none;
    border-color: #0078d7;
}
.tray {
    margin-left: auto;
    display: flex;
}
.tray button {
    width: 32px;
}
.tray .weather {
    width: auto;
    gap: 8px;
    margin-right: 10px;
    font-size: 14px;
}
.clock {
    width: 64px;
    display: flex;
    flex-direction: column;
    justify-content: center;
    align-items: center;
    line-height: 18px;
    font-size: 11px;
}
.tray .notices {
    width: 49px;
    margin-right: 4px;
    border-right: 1px solid #aaa;
}

/* notification */
.toast {
    position: fixed;
    right: 17px;
    bottom: 52px;
    width: 363px;
    height: 131px;
    padding: 18px 22px 0 16px;
    background-color: #e4e4e4;
    color: #000;
}
.toast-head {
    display: flex;
    align-items: center;
    gap: 8px;
    height: 17px;
}
.toast-head button {
    margin-left: auto;
}
.toast-body {
    display: flex;
    gap: 18px;
    margin-top: 16px;
    padding-left: 2px;
    font-size: 14px;
    line-height: 20px;
}
.toast-body > svg {
    margin-top: 11px;
}
.toast-body strong {
    font-weight: 600;
}
.toast-body p {
    margin: 0;
    color: #666;
}
```
FILE: script.js
```js
const people = [
    ['Ahn', '0007', 1344], ['Almanza', '0012', 2376], ['Altamirano', '0015', 984],
    ['Arcuri', '0023', 144], ['Asselin', '0027', 252], ['Aubert', '0028', 5904],
    ['Aumiller', '0029', 780], ['Baez', '0034', 12240], ['Bartsch', '0039', 20280],
    ['Benites', '0041', 1056], ['Bensinger', '0042', 8424], ['Bianco', '0047', 5340],
    ['Borgman', '0057', 5160], ['Bowens', '0060', 1596], ['Breau', '0068', 4416],
    ['Brigham', '0071', 8904], ['Bronner', '0073', 288], ['Callender', '0085', 6504],
    ['Cammack', '0088', 816], ['Chaisson', '0100', 8964], ['Chambless', '0101', 13152],
    ['Christianson', '0108', 2496], ['Coatney', '0113', 876], ['Cobian', '0114', 984],
    ['Couvillion', '0125', 744], ['Cowling', '0128', 456], ['Culley', '0136', 9108],
    ['Curtis', '0138', 300], ['Custard', '0139', 11832], ['Dalley', '0141', 5472],
    ['Daniels', '0143', 7248], ['Danielson', '0144', 5904], ['Dasher', '0147', 528],
    ['Dehner', '0151', 1284], ['Dewitt', '0161', 1272]
];
const titles = ['Customer ID', 'Last Name', 'No of balls', 'Paid', 'Product', 'Purchase Date', 'Order Total', 'Days Delinquent'];
const columns = 20;

let letters = '<th class="corner"></th>';
for (let i = 0; i < columns; i++) {
    const letter = i < 19 ? String.fromCharCode(65 + i) : '';
    letters += `<th class="${letter === 'D' ? 'picked' : ''}">${letter}</th>`;
}
document.getElementById('letters').innerHTML = letters;

const body = document.getElementById('rows');
function addRow(number, cells) {
    let html = `<th class="${number === 1 ? 'picked' : ''}">${number}</th>`;
    for (let i = 0; i < columns; i++) {
        const value = cells[i] === undefined ? '' : cells[i];
        let name = '';
        if (typeof value === 'number') name = 'num';
        if (number === 1 && i === 3) name = 'selected';
        html += `<td class="${name}">${value}</td>`;
    }
    const tr = document.createElement('tr');
    tr.innerHTML = html;
    body.appendChild(tr);
}

addRow(1, titles);
people.forEach((p, i) => addRow(i + 2, [`${p[0]}_${p[1]}`, p[0], p[2], 'No']));
```
